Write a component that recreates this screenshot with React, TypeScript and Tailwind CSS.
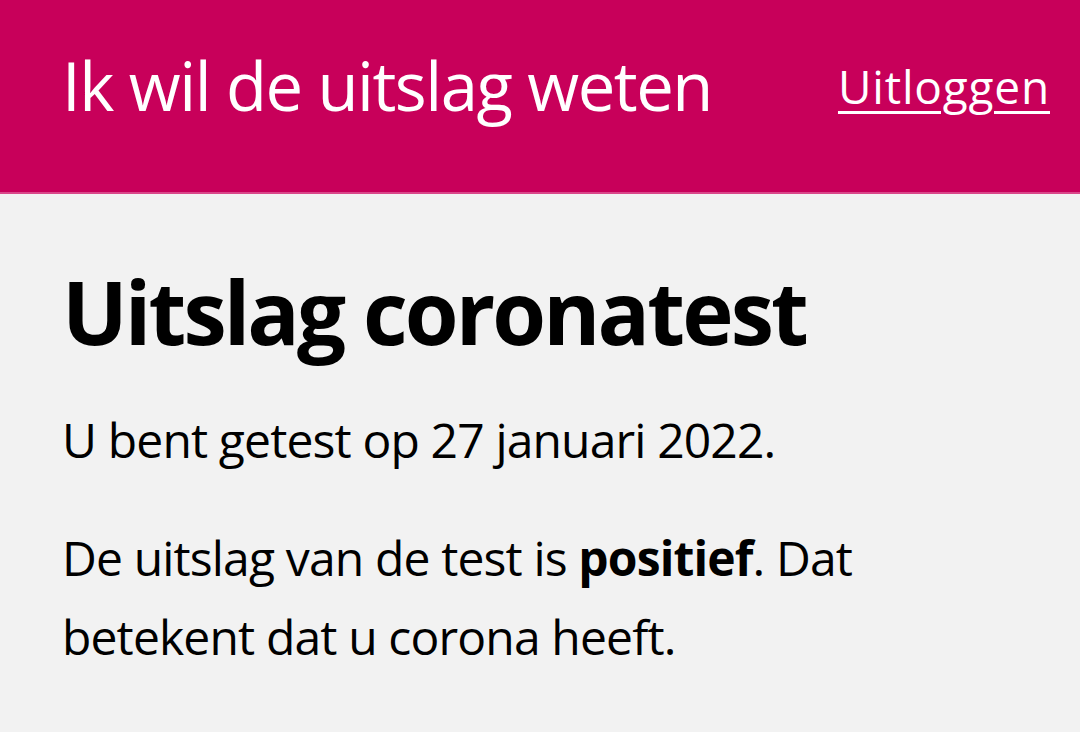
export default function App() {
  return (
    <div className="min-h-[732px] bg-[#f2f2f2] font-['Open_Sans',sans-serif] text-black">
      {/* Header */}
      <header className="flex h-[194px] items-start justify-between border-b-2 border-[#d9478a] bg-[#c8005a] pl-[62px] pr-[30px] text-white">
        <h2 className="mt-[52px] text-[67px] leading-none font-normal tracking-[-1.5px]">Ik wil de uitslag weten</h2>
        <a
          href="#"
          className="mt-[63px] text-[46px] leading-none tracking-[0.8px] underline decoration-[3px] underline-offset-[7px]"
        >
          Uitloggen
        </a>
      </header>

      {/* Content */}
      <main className="px-[62px] pt-[74px]">
        <h1 className="text-[87px] leading-none font-bold tracking-[-2.9px]">Uitslag coronatest</h1>
        <div className="text-[48px] leading-[79px] tracking-[-0.85px]">
          <p className="mt-[45px]">U bent getest op 27 januari 2022.</p>
          <p className="mt-[39px]">
            De uitslag van de test is <strong className="font-bold">positief</strong>. Dat betekent dat u corona heeft.
          </p>
        </div>
      </main>
    </div>
  );
}
